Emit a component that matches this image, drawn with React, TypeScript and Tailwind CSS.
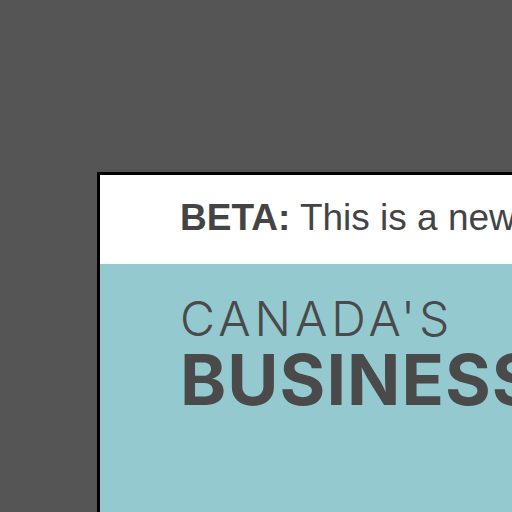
export default function App() {
  return (
    <div className="w-[512px] h-[512px] overflow-hidden bg-[#555555]">
      <div className="ml-[97px] mt-[172px] w-[600px] h-[400px] border-l-[3px] border-t-[3px] border-black">
        <div className="h-[89px] bg-white pl-[80px] pt-[21px] font-['Liberation_Sans',Arial,sans-serif] text-[37px] leading-[44px] text-[#444444] whitespace-nowrap">
          <span className="font-bold">BETA:</span> This is a new
        </div>
        <div className="h-[400px] bg-[#93c9cf] pl-[80px] pt-[28px] font-['Inter',sans-serif] text-[#4a4a4a] whitespace-nowrap">
          <div className="text-[48px] leading-[54px] font-light tracking-[4px]">CANADA'S</div>
          <div className="mt-[2px] text-[70px] leading-[64px] font-bold tracking-[1px]">BUSINESS</div>
        </div>
      </div>
    </div>
  )
}
